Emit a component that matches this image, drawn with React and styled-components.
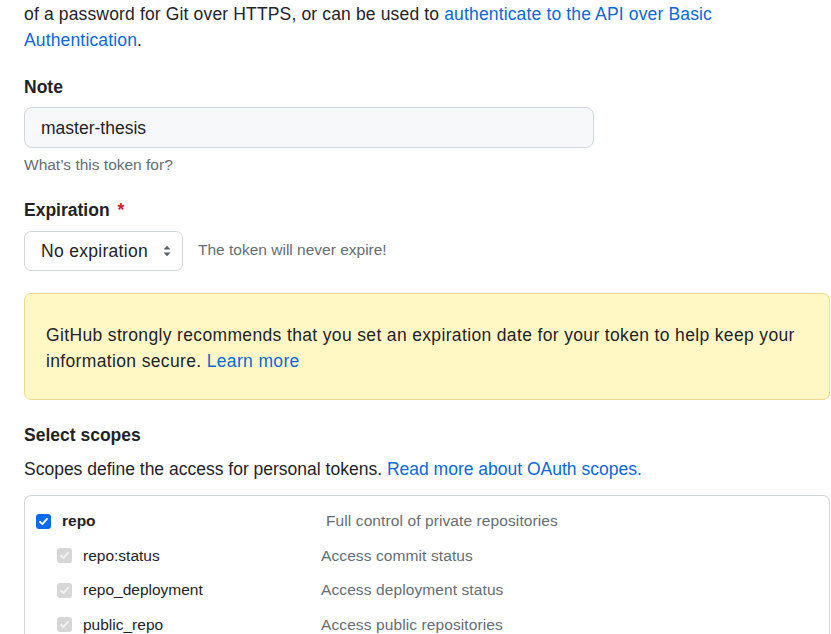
import React from "react";
import styled, { createGlobalStyle } from "styled-components";

const Global = createGlobalStyle`
  html, body { margin: 0; padding: 0; background: #ffffff; overflow: hidden; }
  body { font-family: "Segoe UI", "Liberation Sans", Arial, sans-serif; color: #1f2328; }
`;

const Page = styled.div`
  width: 806px;
  padding: 1px 0 0 24px;
  font-size: 17.5px;
  line-height: 26px;
`;

const Intro = styled.p`
  margin: 0;
  max-width: 720px;
  letter-spacing: 0.15px;
`;

const Link = styled.a`
  color: #0969da;
  text-decoration: none;
`;

const Label = styled.div`
  margin-top: ${(p) => p.$top}px;
  font-weight: 600;
  line-height: 26px;
`;

const Required = styled.span`
  color: #cf222e;
  margin-left: 8px;
`;

const TextInput = styled.div`
  box-sizing: border-box;
  margin-top: 7px;
  width: 570px;
  height: 41px;
  border: 1px solid #d0d7de;
  border-radius: 8px;
  background: #f6f8fa;
  padding: 0 16px;
  display: flex;
  align-items: center;
`;

const Hint = styled.div`
  margin-top: 7px;
  font-size: 15.5px;
  line-height: 20px;
  color: #656d76;
`;

const SelectRow = styled.div`
  margin-top: 8px;
  display: flex;
  align-items: center;
  gap: 15px;
`;

const Select = styled.div`
  box-sizing: border-box;
  width: 159px;
  height: 40px;
  border: 1px solid #d0d7de;
  border-radius: 7px;
  background: #ffffff;
  padding: 0 10px 0 16px;
  display: flex;
  align-items: center;
  justify-content: space-between;
  letter-spacing: 0.3px;
`;

const InlineNote = styled.span`
  font-size: 15.5px;
  color: #656d76;
  margin-top: -2px;
`;

const Flash = styled.div`
  box-sizing: border-box;
  margin-top: 22px;
  height: 107px;
  border: 1px solid #f0d98a;
  border-radius: 7px;
  background: #fff8c5;
  padding: 28px 20px 0 21px;
  color: #1f2328;
  letter-spacing: 0.35px;
`;

const Muted = styled.p`
  margin: 8px 0 0;
  color: #1f2328;
`;

const ScopeBox = styled.div`
  box-sizing: border-box;
  margin-top: 13px;
  border: 1px solid #d0d7de;
  border-bottom: none;
  border-radius: 7px 7px 0 0;
  padding-top: 8px;
  height: 160px;
`;

const ScopeRow = styled.div`
  display: flex;
  align-items: center;
  height: 34.5px;
  padding-left: ${(p) => (p.$sub ? 32 : 11)}px;
  font-size: 15.5px;
`;

const ScopeName = styled.span`
  width: ${(p) => (p.$sub ? 238 : 264)}px;
  margin-left: 11px;
  font-weight: ${(p) => (p.$sub ? 400 : 600)};
  color: #1f2328;
`;

const ScopeDesc = styled.span`
  color: #656d76;
  letter-spacing: 0.1px;
`;

const Box = styled.span`
  box-sizing: border-box;
  width: 15px;
  height: 15px;
  border-radius: 3px;
  background: ${(p) => (p.$disabled ? "#d6d6d6" : "#0b6bf0")};
  display: inline-flex;
  align-items: center;
  justify-content: center;
  flex: none;
`;

function Check({ disabled }) {
  return (
    <Box $disabled={disabled}>
      <svg width="11" height="11" viewBox="0 0 12 12">
        <path
          d="M2.2 6.3 L4.8 8.8 L9.8 3.2"
          fill="none"
          stroke={disabled ? "#f2f2f2" : "#ffffff"}
          strokeWidth="2"
          strokeLinecap="round"
          strokeLinejoin="round"
        />
      </svg>
    </Box>
  );
}

function Arrows() {
  return (
    <svg width="10" height="14" viewBox="0 0 10 14">
      <path d="M1.5 5.5 L5 1.8 L8.5 5.5 Z" fill="#57606a" />
      <path d="M1.5 8.5 L5 12.2 L8.5 8.5 Z" fill="#57606a" />
    </svg>
  );
}

const scopes = [
  { name: "repo:status", desc: "Access commit status" },
  { name: "repo_deployment", desc: "Access deployment status" },
  { name: "public_repo", desc: "Access public repositories" },
];

export default function App() {
  return (
    <>
      <Global />
      <Page>
        <Intro>
          of a password for Git over HTTPS, or can be used to{" "}
          <Link href="#">authenticate to the API over Basic Authentication</Link>.
        </Intro>

        <Label $top={21}>Note</Label>
        <TextInput>master-thesis</TextInput>
        <Hint>What’s this token for?</Hint>

        <Label $top={22}>
          Expiration<Required>*</Required>
        </Label>
        <SelectRow>
          <Select>
            No expiration
            <Arrows />
          </Select>
          <InlineNote>The token will never expire!</InlineNote>
        </SelectRow>

        <Flash>
          GitHub strongly recommends that you set an expiration date for your token to help keep your
          information secure. <Link href="#">Learn more</Link>
        </Flash>

        <Label $top={22}>Select scopes</Label>
        <Muted>
          Scopes define the access for personal tokens.{" "}
          <Link href="#">Read more about OAuth scopes.</Link>
        </Muted>

        <ScopeBox>
          <ScopeRow>
            <Check />
            <ScopeName>repo</ScopeName>
            <ScopeDesc>Full control of private repositories</ScopeDesc>
          </ScopeRow>
          {scopes.map((s) => (
            <ScopeRow $sub key={s.name}>
              <Check disabled />
              <ScopeName $sub>{s.name}</ScopeName>
              <ScopeDesc>{s.desc}</ScopeDesc>
            </ScopeRow>
          ))}
        </ScopeBox>
      </Page>
    </>
  );
}
